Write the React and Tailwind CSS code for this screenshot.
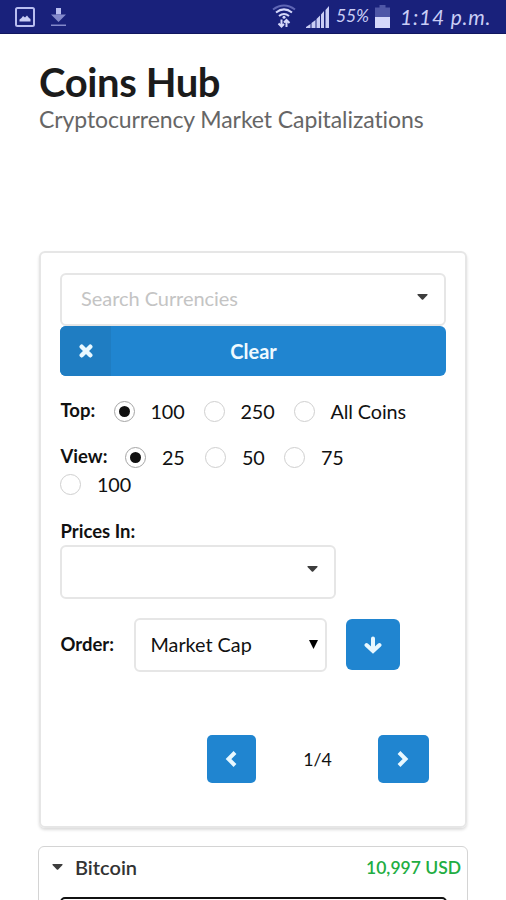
import React from "react";

function StatusBar() {
  return (
    <header className="flex h-[34px] items-center border-b border-[#11175f] bg-[#19217b] text-[#c9cdf5]">
      <svg className="ml-[15px] h-5 w-5" viewBox="0 0 20 20">
        <rect x="1" y="1" width="18" height="18" rx="1.5" fill="none" stroke="#b9bef0" strokeWidth="2" />
        <path d="M4.500 14.500V12.500l2-1.500 1.500-2 2 1.500 2-2 2 2.500 1.500 1v2.500z" fill="#c9cdf5" />
      </svg>
      <svg className="mb-px ml-4 h-[19px] w-[15px]" viewBox="0 0 15 19">
        <path d="M5 1h5v6.500H5z" fill="#b9bef0" />
        <path d="M0 7.500h15L7.500 15z" fill="#8389cb" />
        <path d="M0 17.500h15v1.500H0z" fill="#8389cb" />
      </svg>
      <svg className="mb-px ml-[206px] h-6 w-6" viewBox="0 0 24 24" fill="none" strokeWidth="2">
        <path d="M1 5.500Q12 -2.500 23 5.500" stroke="#5f66b5" />
        <path d="M4 8.500Q12 2.300 20 8.500M7 12Q12 8 17 12" stroke="#d5d8fa" />
        <circle cx="12" cy="13.200" r="1.500" fill="#d5d8fa" />
        <path d="M9.500 15.500v7M6.500 19.500l3 3 2.500-2.500M14.500 23v-7M12 18.500l2.500-2.500 3 3" stroke="#d5d8fa" />
      </svg>
      <svg className="ml-2.5 h-[22px] w-[23px]" viewBox="0 0 23 22" fill="#c9cdf5">
        <path d="M0 22v-1l4.500-3v4zM5.500 22v-5l4-3v8zM10.500 22v-9l3.500-3.500V22zM15 22V8.500L18 5v17zM19.500 22V4L23 0v22z" />
      </svg>
      <span className="ml-[7px] w-[36px] whitespace-nowrap text-[17.5px] italic tracking-[-0.1px]">55%</span>
      <svg className="mb-px ml-[3px] h-[23px] w-[15px]" viewBox="0 0 15 23">
        <path d="M4.500 0h6v2.500H15V12H0V2.500h4.500z" fill="#4f57a7" />
        <path d="M0 12h15v11H0z" fill="#d5d8fa" />
      </svg>
      <span className="ml-[10px] whitespace-nowrap text-[21px] italic tracking-[0.8px]">1:14 p.m.</span>
    </header>
  );
}

function Radio({ label, checked = false, className = "" }) {
  return (
    <label className={"flex items-center " + className}>
      <span
        className={
          "flex h-[21px] w-[21px] shrink-0 items-center justify-center rounded-full border " +
          (checked ? "border-[#a5a5a5]" : "border-[#cfcfcf]")
        }
      >
        {checked && <span className="h-[11px] w-[11px] rounded-full bg-[#101010]" />}
      </span>
      <span className="ml-4 whitespace-nowrap text-[19.8px] leading-[27px] tracking-[-0.1px]">{label}</span>
    </label>
  );
}

function Caret({ className = "" }) {
  return (
    <svg className={"h-[6px] w-[11px] " + className} viewBox="0 0 11 6" fill="#3d3d3d">
      <path d="M1 0h9q1 0 .5 1L6.200 5.500q-.7.700-1.400 0L.5 1Q0 0 1 0z" />
    </svg>
  );
}

function Chevron({ flip = false }) {
  return (
    <svg className="h-[18px] w-[12px]" viewBox="0 0 12 18" fill="none" stroke="#e8f8ff" strokeWidth="4">
      <path d={flip ? "M2 2.500L8.500 9L2 15.500" : "M10 2.500L3.500 9L10 15.500"} />
    </svg>
  );
}

export default function App() {
  return (
    <div className="h-[900px] w-[506px] overflow-hidden bg-white font-['Lato',sans-serif] text-[#111] [font-variant-ligatures:none]">
      <StatusBar />
      <div className="ml-[39px] h-[217px] pt-6">
        <h1 className="whitespace-nowrap text-[40px] leading-[48px] font-bold tracking-[-0.4px] text-[#1b1b1b]">Coins Hub</h1>
        <p className="whitespace-nowrap text-[23px] leading-[27px] tracking-[-0.09px] text-[#666]">Cryptocurrency Market Capitalizations</p>
      </div>

      <section className="ml-[39px] flex h-[577px] w-[428px] flex-col rounded-[6px] border-2 border-[#e6e6e6] px-[19px] pt-5 shadow-[0_2px_3px_rgba(0,0,0,0.14)]">
        <div className="flex h-[53px] w-[386px] shrink-0 items-center justify-between rounded-[6px] border-2 border-[#e6e6e6] pr-[16px] pl-[19px]">
          <span className="mb-[3px] text-[20px] tracking-[-0.05px] text-[#c4c4c4]">Search Currencies</span>
          <Caret className="mb-1.5" />
        </div>
        <button className="flex h-[50px] w-[386px] shrink-0 overflow-hidden rounded-[6px] bg-[#2085d0] text-[20px] font-bold text-[#effaff]">
          <span className="flex h-full w-[51px] items-center justify-center bg-[#1f7dc2]">
            <svg className="h-[14px] w-[14px]" viewBox="0 0 14 14" stroke="#e8f8ff" strokeWidth="4.400" strokeLinecap="round">
              <path d="M2.700 2.700l8.600 8.600M11.300 2.700l-8.600 8.600" />
            </svg>
          </span>
          <span className="flex h-full flex-1 items-center justify-center pr-[50px] pb-px">Clear</span>
        </button>

        <div className="mt-[21.500px] flex h-[27px] shrink-0 items-center pl-[0.500px]">
          <b className="w-[53px] text-[18.500px]">Top:</b>
          <Radio label="100" checked className="w-[90px]" />
          <Radio label="250" className="w-[90px]" />
          <Radio label="All Coins" />
        </div>
        <div className="mt-[19px] flex h-[27px] shrink-0 items-center pl-[0.500px]">
          <b className="w-[64.500px] text-[18.500px]">View:</b>
          <Radio label="25" checked className="w-[80px]" />
          <Radio label="50" className="w-[79px]" />
          <Radio label="75" />
        </div>
        <Radio label="100" className="h-[27px] shrink-0" />

        <b className="mt-[20.500px] pl-[0.500px] text-[18.500px] leading-[27px]">Prices In:</b>
        <div className="flex h-[54px] w-[276px] shrink-0 items-center justify-end rounded-[6px] border-2 border-[#e6e6e6] pr-[16px]">
          <Caret className="mb-1.5" />
        </div>

        <div className="mt-[19px] flex h-[54px] shrink-0 items-center pl-[0.500px]">
          <b className="mb-px w-[73px] text-[18.500px]">Order:</b>
          <div className="flex h-[54px] w-[193px] items-center justify-between rounded-[6px] border-2 border-[#e6e6e6] pr-[7px] pl-[15px]">
            <span className="text-[19.800px]">Market Cap</span>
            <svg className="mb-0.5 h-[9px] w-[9px]" viewBox="0 0 9 9">
              <path d="M0 0h9L4.500 9z" />
            </svg>
          </div>
          <button className="mb-px ml-[19px] flex h-[51px] w-[54px] items-center justify-center rounded-[6px] bg-[#2085d0]">
            <svg className="h-[18px] w-[18px]" viewBox="0 0 18 18" fill="none" stroke="#e8f8ff" strokeWidth="4" strokeLinecap="round">
              <path d="M9 2.500V14M2.500 9L9 15L15.500 9" />
            </svg>
          </button>
        </div>

        <nav className="mt-[63px] ml-[146.500px] flex h-12 shrink-0 items-center">
          <button className="flex h-12 w-[49px] items-center justify-center rounded-[5px] bg-[#2085d0]">
            <Chevron />
          </button>
          <span className="w-[122px] pl-0.5 text-center text-[17.800px]">1/4</span>
          <button className="flex h-12 w-[51px] items-center justify-center rounded-[5px] bg-[#2085d0]">
            <Chevron flip />
          </button>
        </nav>
      </section>

      <section className="mt-[18px] ml-[38px] h-[80px] w-[430px] rounded-[6px] border border-[#d4d4d4]">
        <div className="flex h-10 items-center pr-[6px] pl-[13px]">
          <Caret />
          <span className="ml-3 text-[20px] font-semibold text-[#333]">Bitcoin</span>
          <span className="ml-auto pt-0.5 text-[17.500px] font-semibold text-[#21ad42]">10,997 USD</span>
        </div>
        <div className="mt-[10px] ml-[21px] h-10 w-[387px] rounded-[5px] border-2 border-[#111]" />
      </section>
    </div>
  );
}
